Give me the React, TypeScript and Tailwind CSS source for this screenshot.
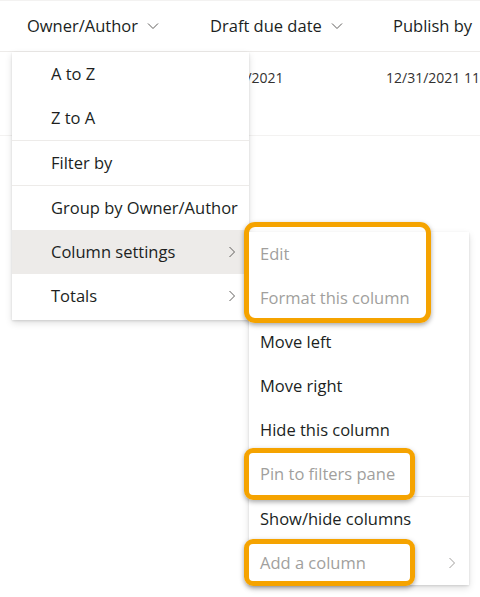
import React from "react";

const Chevron = ({ className = "" }: { className?: string }) => (
  <svg width="8" height="12" viewBox="0 0 8 12" className={className} fill="none">
    <path d="M1.5 1 L6.5 6 L1.5 11" stroke="currentColor" strokeWidth="1" />
  </svg>
);

const ChevronDown = () => (
  <svg width="12" height="8" viewBox="0 0 12 8" fill="none" className="text-[#605e5c]">
    <path d="M1 1.5 L6 6.5 L11 1.5" stroke="currentColor" strokeWidth="1" />
  </svg>
);

const Item = ({
  label,
  disabled,
  sub,
  active,
  pl = "pl-[39px]",
  chevronPr = "pr-[13px]",
}: {
  label: string;
  disabled?: boolean;
  sub?: boolean;
  active?: boolean;
  pl?: string;
  chevronPr?: string;
}) => (
  <div
    className={`h-[44px] flex items-center justify-between whitespace-nowrap ${pl} ${chevronPr} ${
      active ? "bg-[#edebe9]" : ""
    } ${disabled ? "text-[#a19f9d]" : "text-[#201f1e]"}`}
  >
    <span>{label}</span>
    {sub && <Chevron className={disabled ? "text-[#a19f9d]" : "text-[#605e5c]"} />}
  </div>
);

const Sep = () => <div className="h-px bg-[#edebe9]" />;

export default function App() {
  return (
    <div
      className="relative w-[480px] h-[597px] bg-white overflow-hidden"
      style={{ fontFamily: '"Open Sans", "Noto Sans", sans-serif' }}
    >
      {/* header */}
      <div className="h-[52px] border-t border-[#f3f2f1] border-b border-b-[#edebe9] flex items-center text-[16.5px] text-[#201f1e]">
        <div className="w-[210px] pl-[27px] flex items-center gap-[9px]">
          <span>Owner/Author</span>
          <ChevronDown />
        </div>
        <div className="w-[183px] flex items-center gap-[9px]">
          <span>Draft due date</span>
          <ChevronDown />
        </div>
        <div className="whitespace-nowrap">Publish by</div>
      </div>
      {/* data row */}
      <div className="h-[84px] border-b border-[#f3f2f1] flex items-start pt-[15px] text-[14px] text-[#323130]">
        <div className="w-[213px]" />
        <div className="w-[180px]">12/31/2021</div>
        <div className="whitespace-nowrap">12/31/2021 11</div>
      </div>

      {/* main menu */}
      <div className="absolute left-[12px] top-[52px] w-[237px] pb-[2px] bg-white text-[16.5px] shadow-[0_3px_7px_rgba(0,0,0,0.13),0_1px_2px_rgba(0,0,0,0.11)]">
        <Item label="A to Z" />
        <Item label="Z to A" />
        <Sep />
        <Item label="Filter by" />
        <Sep />
        <Item label="Group by Owner/Author" />
        <Item label="Column settings" sub active />
        <Item label="Totals" sub />
      </div>

      {/* submenu */}
      <div className="absolute left-[249px] top-[232px] w-[220px] bg-white text-[16.5px] shadow-[0_3px_7px_rgba(0,0,0,0.13),0_1px_2px_rgba(0,0,0,0.11)]">
        <Item label="Edit" disabled pl="pl-[11px]" />
        <Item label="Format this column" disabled pl="pl-[11px]" />
        <Item label="Move left" pl="pl-[11px]" />
        <Item label="Move right" pl="pl-[11px]" />
        <Item label="Hide this column" pl="pl-[11px]" />
        <Item label="Pin to filters pane" disabled pl="pl-[11px]" />
        <Sep />
        <Item label="Show/hide columns" pl="pl-[11px]" />
        <Item label="Add a column" disabled sub pl="pl-[11px]" />
      </div>

      {/* highlight boxes */}
      <div className="absolute left-[244px] top-[222px] w-[187px] h-[101px] rounded-[11px] border-[5px] border-[#f5a300] shadow-[0_2px_5px_rgba(0,0,0,0.35)]" />
      <div className="absolute left-[244px] top-[448px] w-[171px] h-[52px] rounded-[9px] border-[5px] border-[#f5a300] shadow-[0_2px_5px_rgba(0,0,0,0.35)]" />
      <div className="absolute left-[244px] top-[539px] w-[171px] h-[47px] rounded-[9px] border-[5px] border-[#f5a300] shadow-[0_2px_5px_rgba(0,0,0,0.35)]" />
    </div>
  );
}
